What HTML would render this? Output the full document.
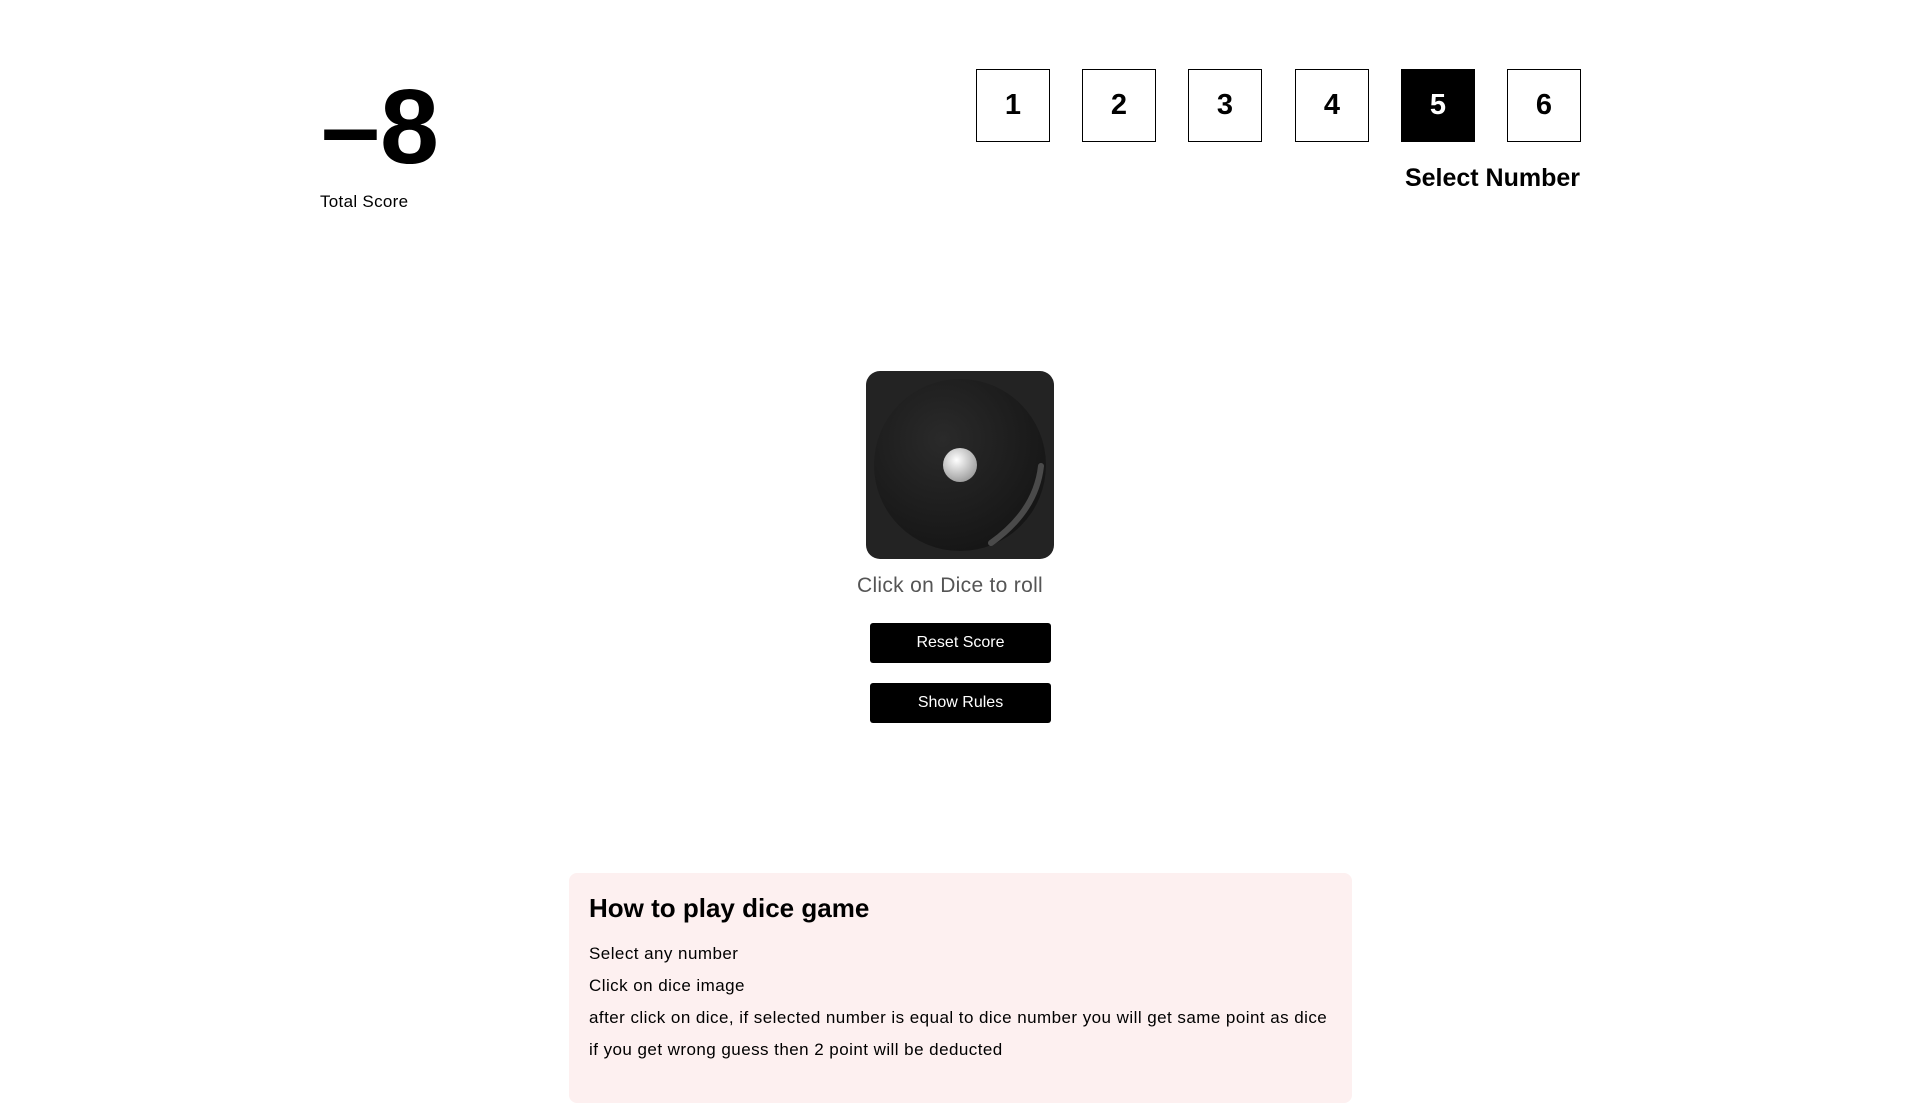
<!DOCTYPE html>
<html><head><meta charset="utf-8"><style>
*{margin:0;padding:0;box-sizing:border-box}
body{width:1920px;height:1090px;background:#fff;font-family:"Liberation Sans",sans-serif;position:relative;overflow:hidden;color:#000}
.abs{position:absolute}
.score{left:321px;top:74px;font-size:106px;font-weight:900;line-height:1;letter-spacing:0}
.ts{left:320px;top:192px;font-size:17px;letter-spacing:0.3px}
.box{position:absolute;top:69px;width:74px;height:73px;border:1px solid #000;display:flex;align-items:center;justify-content:center;font-size:29px;font-weight:bold}
.box.sel{background:#000;color:#fff}
.sn{right:340px;top:164px;font-size:25px;font-weight:bold}
.dice{left:866px;top:371px;width:188px;height:188px;border-radius:14px;background:#232323;overflow:hidden}
.btn{position:absolute;left:870px;width:181px;height:40px;background:#000;color:#fff;font-size:16px;display:flex;align-items:center;justify-content:center;border-radius:3px}
.rules{left:569px;top:873px;width:783px;height:230px;background:#fdf0f0;border-radius:8px;padding:20px 10px 20px 20px}
.rules h2{font-size:26px;font-weight:bold;margin-bottom:14px}
.rules p{font-size:17px;line-height:32px;letter-spacing:0.45px;white-space:nowrap}
</style></head><body>
<div class="abs score">–8</div>
<div class="abs ts">Total Score</div>
<div class="box" style="left:976px">1</div>
<div class="box" style="left:1082px">2</div>
<div class="box" style="left:1188px">3</div>
<div class="box" style="left:1295px">4</div>
<div class="box sel" style="left:1401px">5</div>
<div class="box" style="left:1507px">6</div>
<div class="abs sn">Select Number</div>
<div class="abs dice"><svg width="188" height="188" viewBox="0 0 188 188">
<defs><radialGradient id="g" cx="0.4" cy="0.35" r="0.7"><stop offset="0" stop-color="#2a2a2a"/><stop offset="1" stop-color="#151515"/></radialGradient>
<radialGradient id="p" cx="0.4" cy="0.35" r="0.7"><stop offset="0" stop-color="#fff"/><stop offset="1" stop-color="#999"/></radialGradient></defs>
<circle cx="94" cy="94" r="86" fill="url(#g)"/>
<path d="M125 172 Q170 140 175 95" stroke="#4a4a4a" stroke-width="6" fill="none" stroke-linecap="round"/>
<circle cx="94" cy="94" r="17" fill="url(#p)"/></svg></div>
<div class="abs" style="left:0;width:1900px;text-align:center;top:574px;font-size:21px;color:#555;letter-spacing:0.3px">Click on Dice to roll</div>
<div class="btn" style="top:623px">Reset Score</div>
<div class="btn" style="top:683px">Show Rules</div>
<div class="abs rules"><h2>How to play dice game</h2>
<p>Select any number</p><p>Click on dice image</p><p>after click on dice, if selected number is equal to dice number you will get same point as dice</p><p>if you get wrong guess then 2 point will be deducted</p></div>
</body></html>
